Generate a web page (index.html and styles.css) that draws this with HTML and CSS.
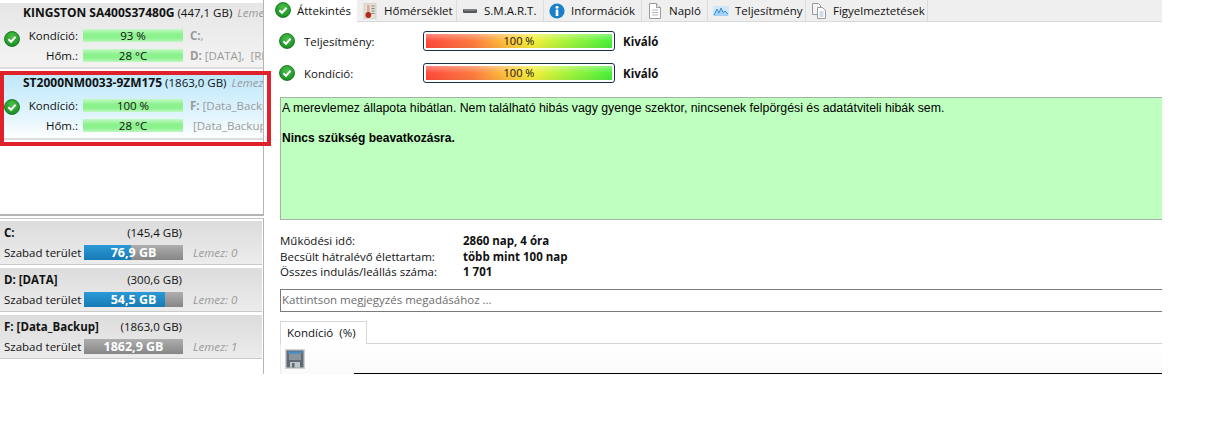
FILE: index.html
```html
<!DOCTYPE html>
<html lang="hu">
<head>
	<meta charset="UTF-8">
	<title>Hard Disk Sentinel</title>
	<link rel="stylesheet" href="styles.css">
</head>
<body>
<svg class="defs" width="0" height="0">
	<defs>
		<radialGradient id="okfill" cx="50%" cy="35%" r="70%">
			<stop offset="0" stop-color="#4cc04a"/>
			<stop offset="1" stop-color="#128a1e"/>
		</radialGradient>
		<symbol id="ok" viewBox="0 0 16 16">
			<circle cx="8" cy="8" r="7.5" fill="url(#okfill)" stroke="#0d6a1a" stroke-width="0.8"/>
			<path d="M4.4 8.3 L7 10.8 L11.6 5.8" fill="none" stroke="#fff" stroke-width="2"/>
		</symbol>
	</defs>
</svg>
<div class="app">
	<div class="side">
		<div class="disks">
			<div class="disk">
				<div class="disk-title"><b>KINGSTON SA400S37480G</b> <span class="size">(447,1 GB)</span> <i>Lemez: 0</i></div>
				<div class="disk-body">
					<svg class="ok-side"><use href="#ok"/></svg>
					<div class="disk-rows">
						<div class="disk-row"><span class="lbl">Kondíció:</span><span class="meter">93 %</span><span class="vols"><b>C:</b>,</span></div>
						<div class="disk-row"><span class="lbl">Hőm.:</span><span class="meter">28 °C</span><span class="vols"><b>D:</b> [DATA], &nbsp;[RESERVED]</span></div>
					</div>
				</div>
			</div>
			<div class="disk selected">
				<div class="disk-title"><b>ST2000NM0033-9ZM175</b> <span class="size">(1863,0 GB)</span> <i>Lemez: 1</i></div>
				<div class="disk-body">
					<svg class="ok-side"><use href="#ok"/></svg>
					<div class="disk-rows">
						<div class="disk-row"><span class="lbl">Kondíció:</span><span class="meter">100 %</span><span class="vols"><b>F:</b> [Data_Backup]</span></div>
						<div class="disk-row"><span class="lbl">Hőm.:</span><span class="meter">28 °C</span><span class="vols vols2">[Data_Backup]</span></div>
					</div>
				</div>
			</div>
		</div>
		<div class="vol-list">
			<div class="vol">
				<div class="vol-head"><b>C:</b><span>(145,4 GB)</span></div>
				<div class="vol-row">
					<span class="free">Szabad terület</span>
					<span class="space"><span class="used" style="width:47%"></span><span class="space-txt">76,9 GB</span></span>
					<i>Lemez: 0</i>
				</div>
			</div>
			<div class="vol">
				<div class="vol-head"><b>D: [DATA]</b><span>(300,6 GB)</span></div>
				<div class="vol-row">
					<span class="free">Szabad terület</span>
					<span class="space"><span class="used" style="width:82%"></span><span class="space-txt">54,5 GB</span></span>
					<i>Lemez: 0</i>
				</div>
			</div>
			<div class="vol">
				<div class="vol-head"><b>F: [Data_Backup]</b><span>(1863,0 GB)</span></div>
				<div class="vol-row">
					<span class="free">Szabad terület</span>
					<span class="space"><span class="space-txt">1862,9 GB</span></span>
					<i>Lemez: 1</i>
				</div>
			</div>
		</div>
		<div class="red-frame"></div>
	</div>

	<div class="main">
		<div class="tabs">
			<div class="tab active t1"><svg class="ico"><use href="#ok"/></svg>Áttekintés</div>
			<div class="tab t2">
				<svg class="ico" viewBox="0 0 16 16">
					<rect x="2" y="0" width="12" height="16" fill="#e6e0d4" stroke="#c4bfb4" stroke-width="0.6"/>
					<path d="M9.5 3h3M9.5 5.5h3M9.5 8h3M9.5 10.5h3" stroke="#7d7d7d"/>
					<rect x="5" y="2" width="2.6" height="9" fill="#d9a79c"/>
					<circle cx="6.3" cy="12" r="2.9" fill="#b02a1c"/>
				</svg>Hőmérséklet</div>
			<div class="tab t3">
				<svg class="ico" viewBox="0 0 16 16">
					<rect x="1" y="6" width="14" height="4" rx="1" fill="#55585a"/>
					<rect x="2" y="6.5" width="12" height="1" fill="#a4a7a9"/>
				</svg>S.M.A.R.T.</div>
			<div class="tab t4">
				<svg class="ico" viewBox="0 0 16 16">
					<circle cx="8" cy="8" r="7.6" fill="#1b80c8"/>
					<circle cx="8" cy="4.2" r="1.5" fill="#fff"/>
					<rect x="6.7" y="6.6" width="2.6" height="6.4" fill="#fff"/>
				</svg>Információk</div>
			<div class="tab t5">
				<svg class="ico" viewBox="0 0 16 16">
					<path d="M2.5 .5h7l4 4v11h-11z" fill="#fff" stroke="#9a9a9a"/>
					<path d="M9.5 .5v4h4" fill="#eee" stroke="#9a9a9a"/>
					<path d="M5 7h6M5 9.5h6M5 12h6" stroke="#b5b5b5"/>
				</svg>Napló</div>
			<div class="tab t6">
				<svg class="ico" viewBox="0 0 16 16">
					<path d="M0 3h16v10h-16z" fill="#cfe5f8"/>
					<path d="M1 12 L4 6 L6 10 L8 5 L10 9.5 L12 8 L15 11 V13 H1z" fill="#a6d0f2"/>
					<path d="M1 12 L4 6 L6 10 L8 5 L10 9.5 L12 8 L15 11" fill="none" stroke="#3a8fd4" stroke-width="1"/>
				</svg>Teljesítmény</div>
			<div class="tab t7">
				<svg class="ico" viewBox="0 0 16 16">
					<path d="M1.5 .5h6l2 2v9h-8z" fill="#f4f4f4" stroke="#9a9a9a"/>
					<path d="M6.5 4.5h5l3 3v8h-8z" fill="#fff" stroke="#9a9a9a"/>
					<path d="M8.5 9h4M8.5 11h4M8.5 13h4" stroke="#9ab4cc"/>
				</svg>Figyelmeztetések</div>
		</div>

		<div class="content">
			<div class="status first">
				<svg class="ok-row"><use href="#ok"/></svg>
				<span class="status-lbl">Teljesítmény:</span>
				<div class="grade"><div class="grade-in">100 %</div></div>
				<b>Kiváló</b>
			</div>
			<div class="status">
				<svg class="ok-row"><use href="#ok"/></svg>
				<span class="status-lbl">Kondíció:</span>
				<div class="grade"><div class="grade-in">100 %</div></div>
				<b>Kiváló</b>
			</div>

			<div class="report">
				<p>A merevlemez állapota hibátlan. Nem található hibás vagy gyenge szektor, nincsenek felpörgési és adatátviteli hibák sem.</p>
				<p class="advice">Nincs szükség beavatkozásra.</p>
			</div>

			<div class="facts">
				<div class="fact"><span>Működési idő:</span><b>2860 nap, 4 óra</b></div>
				<div class="fact"><span>Becsült hátralévő élettartam:</span><b>több mint 100 nap</b></div>
				<div class="fact"><span>Összes indulás/leállás száma:</span><b>1 701</b></div>
			</div>

			<div class="note">Kattintson megjegyzés megadásához ...</div>

			<div class="subtabs"><div class="subtab">Kondíció &nbsp;(%)</div></div>
			<div class="toolbar">
				<svg class="save" viewBox="0 0 20 20">
					<rect width="20" height="20" fill="#d0d0d0"/>
					<rect x="1.5" y="1.5" width="17" height="17" fill="#5f6a74"/>
					<rect x="3" y="2.5" width="14" height="2" fill="#3f8fd0"/>
					<rect x="4" y="4.5" width="12" height="6.5" fill="#8a949c"/>
					<rect x="5" y="13" width="10" height="5.5" fill="#bfc4c8"/>
					<rect x="7" y="14" width="2.5" height="4.5" fill="#5f6a74"/>
				</svg>
				<div class="chart-line"></div>
			</div>
		</div>
	</div>
</div>
</body>
</html>
```

FILE: styles.css
```css
* {
	margin: 0;
	padding: 0;
	box-sizing: border-box;
}
body {
	background: #fff;
	font-family: "Open Sans", "Liberation Sans", sans-serif;
	font-size: 11.5px;
	color: #111;
}
b {
	font-weight: 700;
}
.defs {
	display: block;
	height: 0;
}
.app {
	display: flex;
	width: 1162px;
	height: 374px;
	overflow: hidden;
}

/* left column */
.side {
	position: relative;
	flex: none;
	width: 272px;
}
.disks {
	width: 264px;
	height: 216px;
	padding-top: 3px;
	border-right: 1px solid #b4b4b4;
	border-bottom: 2px solid #b4b4b4;
}
.disk {
	height: 66px;
	margin-bottom: 3px;
	overflow: hidden;
	white-space: nowrap;
	background: linear-gradient(#e6e6e6, #f3f3f3);
	border-bottom: 2px solid #ddd;
}
.disk.selected {
	height: 68px;
	background: linear-gradient(#bce7fb, #e4f5fd 70%, #fff);
}
.disk-title {
	height: 22px;
	padding: 1px 0 0 23px;
	line-height: 17px;
}
.selected .disk-title {
	padding-top: 2px;
}
.disk-title b {
	font-size: 12px;
}
.disk-title i {
	color: #9a9a9a;
	margin-left: 2px;
}
.disk-body {
	display: flex;
	align-items: flex-start;
}
.ok-side {
	flex: none;
	width: 16px;
	height: 16px;
	margin: 6px 0 0 4px;
}
.selected .ok-side {
	margin-top: 5px;
}
.disk-rows {
	display: flex;
	flex-direction: column;
	gap: 7px;
	margin-top: 4px;
}
.selected .disk-rows {
	margin-top: 5px;
}
.disk-row {
	display: flex;
	align-items: center;
	height: 13px;
}
.lbl {
	width: 58px;
	text-align: right;
}
.meter {
	width: 100px;
	height: 13px;
	margin-left: 5px;
	line-height: 14px;
	text-align: center;
	background: linear-gradient(#c4f9c6, #8cf28e 40%, #8cf28e 70%, #c0f8c2);
}
.vols {
	margin-left: 7px;
	color: #9a9a9a;
}
.vols2 {
	margin-left: 10px;
}
.vol-list {
	width: 264px;
	height: 158px;
	padding-top: 2px;
	border-right: 1px solid #b4b4b4;
	border-top: 1px solid #c4c4c4;
	margin-top: 2px;
}
.vol {
	width: 262px;
	height: 44px;
	margin-bottom: 3px;
	padding: 3px 0 0 4px;
	background: linear-gradient(#dcdcdc, #ececec);
	border-bottom: 1px solid #c8c8c8;
}
.vol-head {
	display: flex;
	justify-content: space-between;
	width: 178px;
	height: 18px;
	line-height: 17px;
}
.vol-row {
	display: flex;
	align-items: center;
	margin-top: 3px;
}
.free {
	width: 80px;
	white-space: nowrap;
}
.space {
	position: relative;
	display: block;
	width: 99px;
	height: 15px;
	background: linear-gradient(#aeaeae, #868686);
}
.used {
	position: absolute;
	top: 0;
	bottom: 0;
	left: 0;
	background: linear-gradient(#2b9ad8, #177ab4);
}
.space-txt {
	position: relative;
	display: block;
	line-height: 15px;
	text-align: center;
	font-size: 12.5px;
	font-weight: 700;
	color: #fff;
}
.vol-row i {
	margin-left: 10px;
	color: #9a9a9a;
}
.red-frame {
	position: absolute;
	top: 71px;
	left: 0;
	width: 271px;
	height: 75px;
	border: 4px solid #e0212c;
}

/* right column */
.main {
	flex: 1;
	min-width: 0;
}
.tabs {
	display: flex;
	height: 22px;
	background: #efefef;
	border-bottom: 1px solid #d9d9d9;
}
.tab {
	display: flex;
	align-items: center;
	height: 21px;
	gap: 6px;
	padding-left: 5px;
	white-space: nowrap;
	border-right: 1px solid #dcdcdc;
}
.tab.active {
	height: 22px;
	background: #fff;
	padding-left: 3px;
	border-right: none;
	padding-bottom: 2px;
}
.t1 { width: 85px; }
.t2 { width: 100px; }
.t3 { width: 87px; }
.t4 { width: 98px; }
.t5 { width: 66px; }
.t6 { width: 98px; }
.t7 { width: 122px; }
.ico {
	flex: none;
	width: 16px;
	height: 16px;
}
.content {
	padding-left: 8px;
}
.status {
	display: flex;
	align-items: center;
	height: 20px;
	margin-top: 12px;
}
.status.first {
	margin-top: 9px;
}
.ok-row {
	flex: none;
	width: 16px;
	height: 16px;
	margin-left: -1px;
}
.status-lbl {
	width: 119px;
	margin-left: 9px;
}
.grade {
	width: 192px;
	height: 20px;
	padding: 2px;
	border: 1px solid #1c3044;
	border-radius: 3px;
	background: #fff;
}
.grade-in {
	height: 14px;
	line-height: 14px;
	text-align: center;
	font-size: 11px;
	background: linear-gradient(rgba(255,255,255,.35), rgba(255,255,255,0) 50%, rgba(0,0,0,.05)), linear-gradient(90deg, #ff4a3c 0%, #ff7a40 25%, #ffc83c 45%, #f4f03c 58%, #a8f43c 75%, #48f03c 100%);
}
.status b {
	margin-left: 8px;
}
.report {
	height: 123px;
	margin-top: 14px;
	padding: 3px 1px;
	background: #bfffbf;
	border: 1px solid #a3b3a3;
	border-width: 1px 0 1px 1px;
	font-family: "Liberation Sans", Arial, sans-serif;
	font-size: 12.3px;
	line-height: 15px;
	color: #000;
}
.advice {
	margin-top: 15px;
	font-size: 12px;
	font-weight: 700;
}
.facts {
	margin-top: 13px;
}
.fact {
	display: flex;
	height: 15.5px;
	line-height: 15px;
}
.fact span {
	width: 183px;
}
.note {
	height: 23px;
	margin-top: 9px;
	padding-left: 1px;
	line-height: 20px;
	color: #6d6d6d;
	border: 1px solid #7a7a7a;
	border-right: none;
}
.subtabs {
	height: 23px;
	margin-top: 9px;
	border-bottom: 1px solid #d4d4d4;
}
.subtab {
	width: 87px;
	height: 23px;
	padding: 3px 0 0 6px;
	background: #fff;
	border: 1px solid #d8d8d8;
	border-bottom: none;
	white-space: nowrap;
}
.toolbar {
	position: relative;
	display: flex;
	height: 30px;
	padding: 5px 0 0 4px;
	background: linear-gradient(#fff, #fafafa);
	border-left: 1px solid #ececec;
}
.save {
	width: 20px;
	height: 20px;
}
.chart-line {
	position: absolute;
	left: 73px;
	right: 0;
	bottom: 0;
	height: 1px;
	background: #000;
}
```
